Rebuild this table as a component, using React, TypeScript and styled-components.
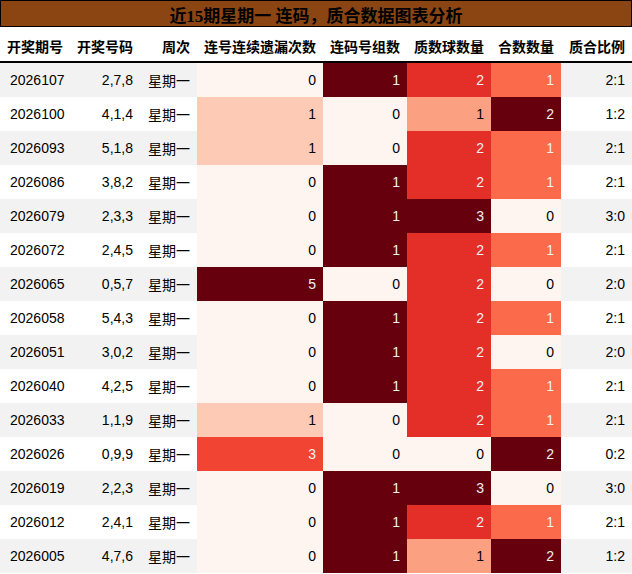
import React from "react";
import styled, { createGlobalStyle } from "styled-components";

const GlobalStyle = createGlobalStyle`
  html, body { margin: 0; padding: 0; background: #ffffff; }
  body { font-family: "Liberation Sans", "Noto Sans CJK SC", sans-serif; }
`;

const REDS = [
  "#fff5f0", "#fee0d2", "#fcbba1", "#fc9272", "#fb6a4a",
  "#ef3b2c", "#cb181d", "#a50f15", "#67000d",
];

const hexToRgb = (h: string) => [
  parseInt(h.slice(1, 3), 16),
  parseInt(h.slice(3, 5), 16),
  parseInt(h.slice(5, 7), 16),
];

function reds(t: number): [number, number, number] {
  const x = Math.max(0, Math.min(1, t)) * (REDS.length - 1);
  const i = Math.min(REDS.length - 2, Math.floor(x));
  const f = x - i;
  const a = hexToRgb(REDS[i]);
  const b = hexToRgb(REDS[i + 1]);
  return [0, 1, 2].map((k) => Math.round(a[k] + (b[k] - a[k]) * f)) as [number, number, number];
}

function luminance([r, g, b]: [number, number, number]) {
  const c = [r, g, b].map((v) => {
    const s = v / 255;
    return s <= 0.03928 ? s / 12.92 : Math.pow((s + 0.055) / 1.055, 2.4);
  });
  return 0.2126 * c[0] + 0.7152 * c[1] + 0.0722 * c[2];
}

type Row = [string, string, number, number, number, number, string];

const rows: Row[] = [
  ["2026107", "2,7,8", 0, 1, 2, 1, "2:1"],
  ["2026100", "4,1,4", 1, 0, 1, 2, "1:2"],
  ["2026093", "5,1,8", 1, 0, 2, 1, "2:1"],
  ["2026086", "3,8,2", 0, 1, 2, 1, "2:1"],
  ["2026079", "2,3,3", 0, 1, 3, 0, "3:0"],
  ["2026072", "2,4,5", 0, 1, 2, 1, "2:1"],
  ["2026065", "0,5,7", 5, 0, 2, 0, "2:0"],
  ["2026058", "5,4,3", 0, 1, 2, 1, "2:1"],
  ["2026051", "3,0,2", 0, 1, 2, 0, "2:0"],
  ["2026040", "4,2,5", 0, 1, 2, 1, "2:1"],
  ["2026033", "1,1,9", 1, 0, 2, 1, "2:1"],
  ["2026026", "0,9,9", 3, 0, 0, 2, "0:2"],
  ["2026019", "2,2,3", 0, 1, 3, 0, "3:0"],
  ["2026012", "2,4,1", 0, 1, 2, 1, "2:1"],
  ["2026005", "4,7,6", 0, 1, 1, 2, "1:2"],
];

const headers = [
  "开奖期号", "开奖号码", "周次", "连号连续遗漏次数",
  "连码号组数", "质数球数量", "合数数量", "质合比例",
];

const COLS = "70px 70px 57px 126px 84px 84px 70px 71px";

const Page = styled.div`
  width: 632px;
`;

const Title = styled.div`
  height: 25px;
  border: 1px solid #000;
  background: #8b4513;
  color: #000;
  display: flex;
  align-items: center;
  justify-content: center;
  padding-top: 1px;
  box-sizing: border-box;
  height: 27px;
  font-family: "Liberation Serif", "Noto Sans CJK SC", serif;
  font-weight: bold;
  font-size: 17px;
  white-space: pre;
`;

const Grid = styled.div`
  display: grid;
  grid-template-columns: ${COLS};
`;

const HeaderRow = styled(Grid)`
  height: 36px;
  box-sizing: border-box;
  padding-top: 3px;
  border-bottom: 2px solid #000;
`;

const HeaderCell = styled.div`
  display: flex;
  align-items: center;
  justify-content: flex-end;
  padding: 0 7px;
  font-family: "Noto Sans CJK SC", sans-serif;
  font-weight: bold;
  font-size: 14px;
  color: #000;
  white-space: nowrap;
`;

const BodyRow = styled(Grid)<{ $striped: boolean }>`
  height: 34px;
  background: ${(p) => (p.$striped ? "#f2f2f2" : "#ffffff")};
`;

const Cell = styled.div<{ $align?: "left" | "right" }>`
  display: flex;
  align-items: center;
  justify-content: ${(p) => (p.$align === "left" ? "flex-start" : "flex-end")};
  padding: 0 7px 0 ${(p) => (p.$align === "left" ? "10px" : "7px")};
  font-family: "Liberation Sans", "Noto Sans CJK SC", sans-serif;
  font-size: 14px;
  color: #000;
  white-space: nowrap;
`;

const HeatCell = styled(Cell)<{ $bg: string; $fg: string }>`
  background: ${(p) => p.$bg};
  color: ${(p) => p.$fg};
`;

const ranges = [5, 1, 3, 2];

function heat(v: number, max: number) {
  const rgb = reds(v / max);
  const bg = `rgb(${rgb[0]}, ${rgb[1]}, ${rgb[2]})`;
  const fg = luminance(rgb) < 0.408 ? "#f1f1f1" : "#000000";
  return { bg, fg };
}

export default function App() {
  return (
    <Page>
      <GlobalStyle />
      <Title>近15期星期一 连码，质合数据图表分析</Title>
      <HeaderRow>
        {headers.map((h) => (
          <HeaderCell key={h}>{h}</HeaderCell>
        ))}
      </HeaderRow>
      {rows.map((r, i) => (
        <BodyRow key={r[0]} $striped={i % 2 === 0}>
          <Cell $align="left">{r[0]}</Cell>
          <Cell>{r[1]}</Cell>
          <Cell>星期一</Cell>
          {[r[2], r[3], r[4], r[5]].map((v, k) => {
            const c = heat(v, ranges[k]);
            return (
              <HeatCell key={k} $bg={c.bg} $fg={c.fg}>
                {v}
              </HeatCell>
            );
          })}
          <Cell>{r[6]}</Cell>
        </BodyRow>
      ))}
    </Page>
  );
}
